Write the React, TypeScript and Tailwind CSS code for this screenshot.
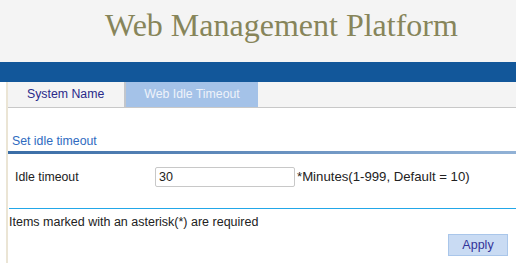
export default function App() {
  return (
    <div className="w-[516px] h-[263px] overflow-hidden bg-white font-['Liberation_Sans',Arial,sans-serif] text-[12px] text-[#222]">
      {/* Header */}
      <header className="h-[62px] bg-[#f4f4f4] pl-[105px] pt-[7px]">
        <h1 className="font-['Liberation_Serif','Times_New_Roman',serif] text-[32px] leading-[36px] text-[#87855a]">
          Web Management Platform
        </h1>
      </header>
      <div className="h-[20px] bg-[#12579a]" />

      <div className="flex h-[181px]">
        <div className="w-[6px]" />
        <div className="w-[2px] bg-[#ebe5d5]" />

        <main className="flex-1 flex flex-col">
          {/* Tabs */}
          <div className="flex h-[26px] bg-[#f4f4f4] border-b border-[#c8c8c8]">
            <div className="w-[116px] pl-[19px] flex items-center text-[12.3px] text-[#2a2a8a]">System Name</div>
            <div className="w-[134px] flex items-center justify-center bg-[#a4c2e8] border-l-2 border-[#c2c6cc] text-[12.3px] text-[#eef2fa]">
              Web Idle Timeout
            </div>
          </div>

          {/* Section */}
          <div className="mt-[26px] pl-[4px] leading-[14px] text-[12.3px] text-[#2f6bbf]">Set idle timeout</div>
          <div className="mt-[3px] h-[3px] bg-gradient-to-r from-[#3a6da6] to-[#92b2d6]" />

          <div className="mt-[13px] flex items-center">
            <label className="w-[147px] pl-[7px] text-[12.3px]">Idle timeout</label>
            <input
              defaultValue="30"
              className="w-[140px] h-[20px] px-[3px] border border-[#c8c8c8] rounded-[2px] text-[12.5px] text-[#222] outline-none"
            />
            <span className="ml-[2px] text-[13.2px]">*Minutes(1-999, Default = 10)</span>
          </div>

          <div className="mt-[21px] ml-[1px] h-px bg-[#22a7e8]" />
          <div className="mt-[6px] ml-[1px] leading-[14px] text-[12.5px]">Items marked with an asterisk(*) are required</div>

          <div className="mt-[5px] flex justify-end pr-[8px]">
            <button className="w-[60px] h-[22px] bg-[#c9dbf3] border border-[#a9c6ea] text-[12.5px] text-[#333399]">Apply</button>
          </div>
        </main>
      </div>
    </div>
  );
}
